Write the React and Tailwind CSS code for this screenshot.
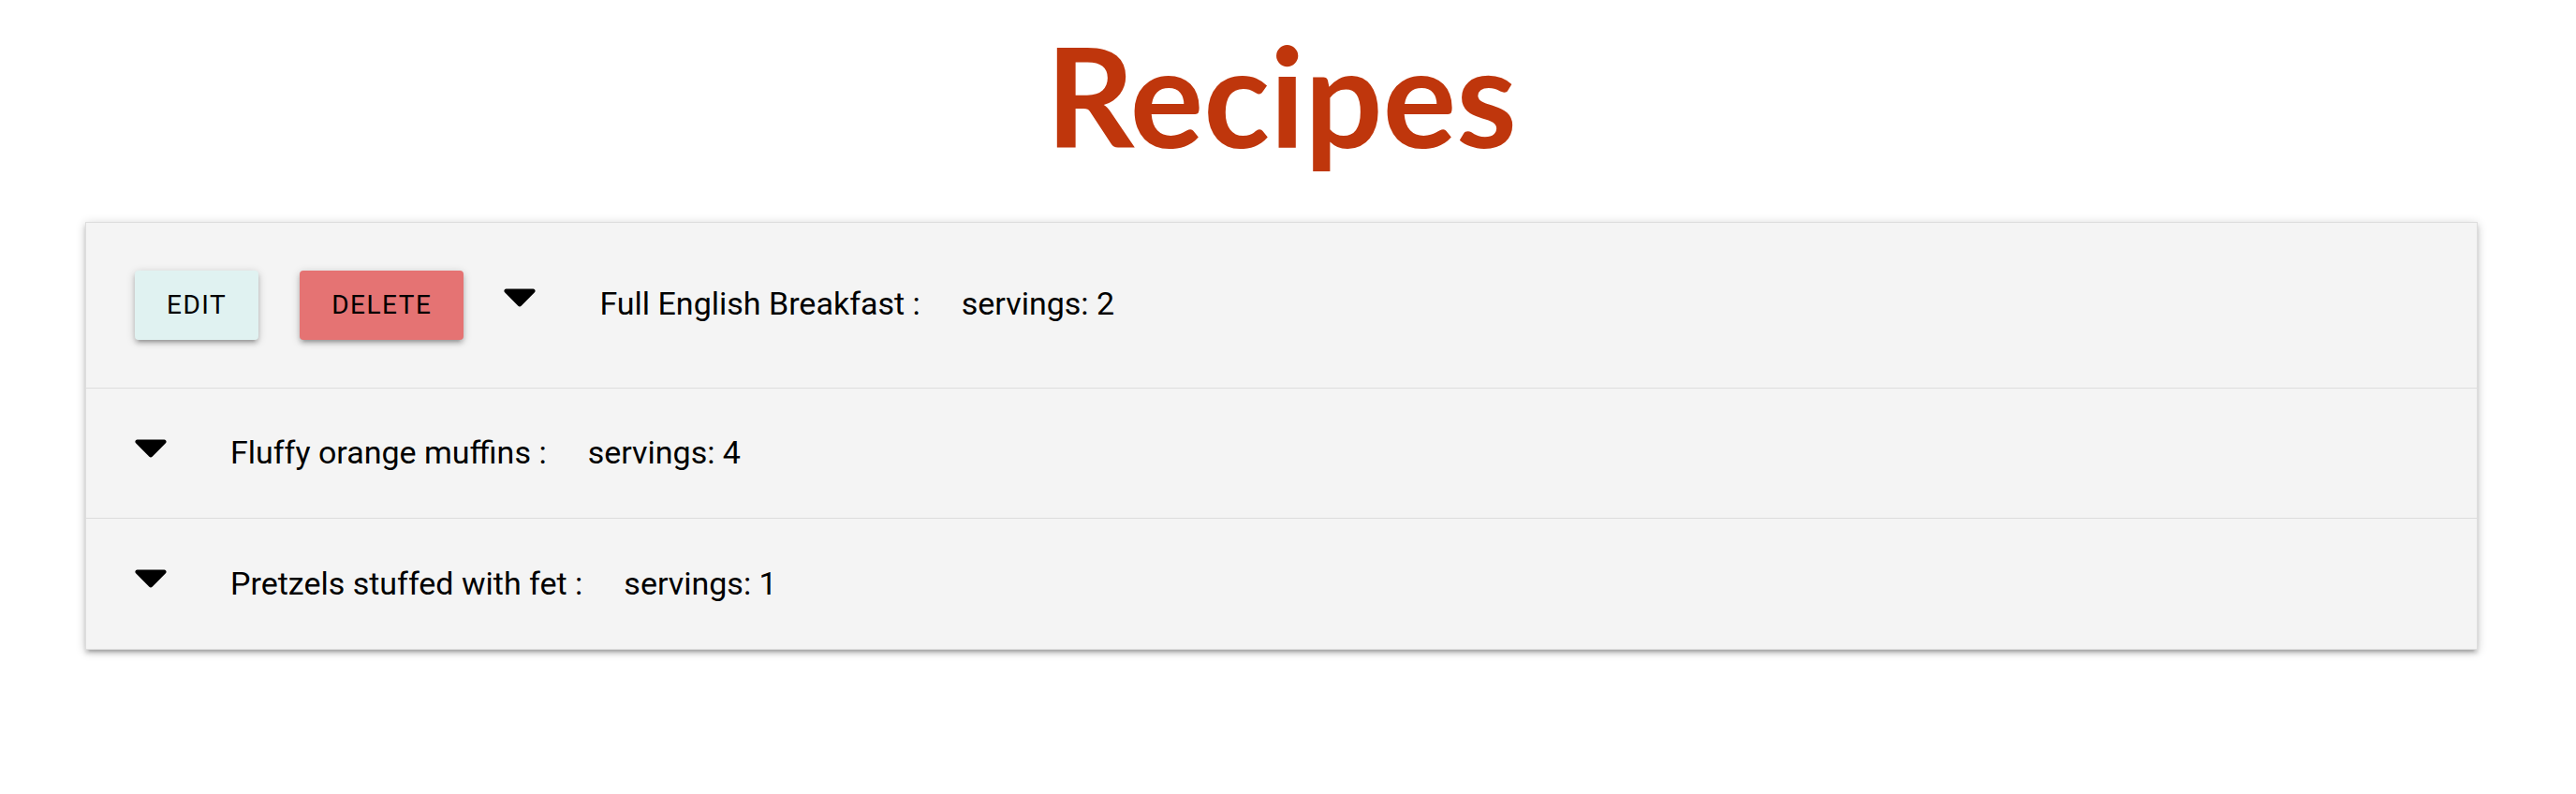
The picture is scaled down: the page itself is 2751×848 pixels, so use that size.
import React from 'react'

const recipes = [
  { name: 'Full English Breakfast', servings: 2, open: true },
  { name: 'Fluffy orange muffins', servings: 4 },
  { name: 'Pretzels stuffed with fet', servings: 1 },
]

function Caret({ high }) {
  return (
    <svg
      viewBox="8 192 304 169"
      className={`w-[34px] h-[20px] shrink-0 ${high ? '-mt-[16px]' : '-mt-[10px]'}`}
      fill="currentColor"
    >
      <path d="M31.3 192h257.3c17.8 0 26.7 21.5 14.1 34.1L174.1 354.8c-7.8 7.8-20.5 7.8-28.3 0L17.2 226.1C4.6 213.5 13.5 192 31.3 192z" />
    </svg>
  )
}

const btn =
  'h-[74px] rounded-[4px] text-[28px] tracking-[1.5px] text-black shadow-[0_4px_4px_0_rgba(0,0,0,0.14),0_6px_2px_-4px_rgba(0,0,0,0.12),0_2px_10px_0_rgba(0,0,0,0.2)]'

function Row({ recipe, last }) {
  return (
    <div
      className={`flex items-center pl-[52px] ${recipe.open ? 'h-[177px]' : 'h-[139px]'} ${last ? '' : 'border-b border-[#dddddd]'}`}
    >
      {recipe.open && (
        <>
          <button className={`${btn} px-[34px] mr-[44px] bg-[#e0f2f1]`}>EDIT</button>
          <button className={`${btn} px-[34px] mr-[43px] bg-[#e57373]`}>DELETE</button>
        </>
      )}
      <Caret high={recipe.open} />
      <span className={`ml-[68px] text-[34px] text-black ${recipe.open ? '-mt-[3px]' : ''}`}>{recipe.name} :</span>
      <span className={`ml-[44px] text-[34px] text-black ${recipe.open ? '-mt-[3px]' : ''}`}>servings: {recipe.servings}</span>
    </div>
  )
}

export default function App() {
  return (
    <div className="min-h-screen bg-white" style={{ fontFamily: 'Roboto, "Liberation Sans", sans-serif' }}>
      <div className="w-[2737px]">
        <h1
          className="text-center text-[#bf360c] font-bold text-[147px] leading-[1.1] pt-[21px]"
          style={{ fontFamily: 'Lato, "Liberation Sans", sans-serif' }}
        >
          Recipes
        </h1>
        <div className="mx-[91px] mt-[54px] border border-[#dddddd] bg-[#f4f4f4] shadow-[0_4px_4px_0_rgba(0,0,0,0.14),0_6px_2px_-4px_rgba(0,0,0,0.12),0_2px_10px_0_rgba(0,0,0,0.2)]">
          {recipes.map((r, i) => (
            <Row key={r.name} recipe={r} last={i === recipes.length - 1} />
          ))}
        </div>
      </div>
    </div>
  )
}
